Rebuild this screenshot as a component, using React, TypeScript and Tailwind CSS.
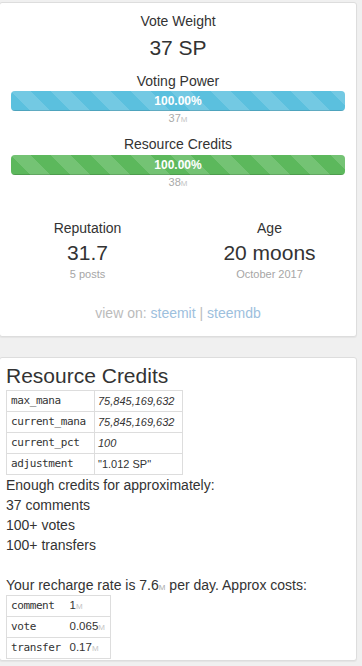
import React from "react";

const sans = "font-['Liberation_Sans',Arial,sans-serif]";
const mono = "font-['DejaVu_Sans_Mono',monospace] text-[11px] tracking-[-0.4px]";

const stripes =
  "bg-[linear-gradient(45deg,rgba(255,255,255,.15)_25%,transparent_25%,transparent_50%,rgba(255,255,255,.15)_50%,rgba(255,255,255,.15)_75%,transparent_75%,transparent)] bg-[length:40px_40px]";

const M = ({ light }: { light?: boolean }) => (
  <span className={`text-[8px] leading-[0] ${light ? "text-[#c4c4c4]" : "text-[#aaa]"}`}>M</span>
);

const Bar = ({ color }: { color: string }) => (
  <div className="h-[20px] rounded-[4px] bg-[#f5f5f5] overflow-hidden">
    <div
      className={`h-full w-full ${color} ${stripes} shadow-[inset_0_-1px_0_rgba(0,0,0,0.15)] text-white text-[12px] font-bold leading-[20px] text-center`}
    >
      100.00%
    </div>
  </div>
);

const rcRows: [string, React.ReactNode][] = [
  ["max_mana", <i>75,845,169,632</i>],
  ["current_mana", <i>75,845,169,632</i>],
  ["current_pct", <i>100</i>],
  ["adjustment", <span>"1.012 SP"</span>],
];

const costRows: [string, string][] = [
  ["comment", "1"],
  ["vote", "0.065"],
  ["transfer", "0.17"],
];

export default function App() {
  return (
    <div className={`min-h-[666px] bg-[#f0f0f0] pt-[2px] text-[#333] ${sans}`}>
      {/* stats card */}
      <div className="-ml-px w-[358px] bg-white border border-[#ddd] rounded-[3px] shadow-[0_1px_1px_rgba(0,0,0,0.05)] pt-[8px] pb-[13px]">
        <div className="px-[11px] text-center">
          <div className="text-[14px] leading-[20px]">Vote Weight</div>
          <div className="mt-[2px] text-[21px] leading-[30px]">37 SP</div>
          <div className="mt-[8px] text-[14px] leading-[20px]">Voting Power</div>
          <Bar color="bg-[#5bc0de]" />
          <div className="text-[11px] leading-[14px] text-[#aaa]">
            37<M light />
          </div>
          <div className="mt-[9px] text-[14px] leading-[20px]">Resource Credits</div>
          <div className="mt-px">
            <Bar color="bg-[#5cb85c]" />
          </div>
          <div className="text-[11px] leading-[14px] text-[#aaa]">
            38<M light />
          </div>
        </div>

        <div className="mt-[29px] grid grid-cols-[175px_175px] gap-[7px] text-center">
          <div>
            <div className="text-[14px] leading-[20px]">Reputation</div>
            <div className="text-[21px] leading-[30px]">31.7</div>
            <div className="text-[11px] leading-[12px] text-[#a6a6a6]">5 posts</div>
          </div>
          <div>
            <div className="text-[14px] leading-[20px]">Age</div>
            <div className="text-[21px] leading-[30px]">20 moons</div>
            <div className="text-[11px] leading-[12px] text-[#a6a6a6]">October 2017</div>
          </div>
        </div>

        <div className="mt-[23px] text-center text-[14px] leading-[20px] text-[#bbb]">
          view on: <a className="text-[#9dc0dd]">steemit</a> |{" "}
          <a className="text-[#9dc0dd]">steemdb</a>
        </div>
      </div>

      {/* resource credits card */}
      <div className="-ml-px mt-[20px] w-[358px] bg-white border border-[#ddd] rounded-[3px] shadow-[0_1px_1px_rgba(0,0,0,0.05)] pl-[6px] pt-[5px] pb-px">
        <h3 className="text-[21px] leading-[26px]">Resource Credits</h3>
        <table className="mt-px w-[176px] table-fixed border-collapse text-[11px]">
          <colgroup>
            <col className="w-[88px]" />
            <col className="w-[88px]" />
          </colgroup>
          <tbody>
            {rcRows.map(([k, v]) => (
              <tr key={k}>
                <td className={`border border-[#ddd] h-[21px] p-0 pl-[4px] ${mono}`}>{k}</td>
                <td className="border border-[#ddd] h-[21px] p-0 pl-[3px]">{v}</td>
              </tr>
            ))}
          </tbody>
        </table>

        <div className="text-[14px] leading-[20px]">
          <div>Enough credits for approximately:</div>
          <div>37 comments</div>
          <div>100+ votes</div>
          <div>100+ transfers</div>
          <div className="h-[20px]" />
          <div>
            Your recharge rate is 7.6<M /> per day. Approx costs:
          </div>
        </div>

        <table className="w-[104px] table-fixed border-collapse text-[11.5px]">
          <colgroup>
            <col className="w-[60px]" />
            <col className="w-[44px]" />
          </colgroup>
          <tbody>
            {costRows.map(([k, v]) => (
              <tr key={k} className="border border-[#ddd]">
                <td className={`h-[21px] p-0 pl-[4px] ${mono}`}>{k}</td>
                <td className="h-[21px] p-0 pl-[3px]">
                  {v}
                  <M light />
                </td>
              </tr>
            ))}
          </tbody>
        </table>
      </div>
    </div>
  );
}
